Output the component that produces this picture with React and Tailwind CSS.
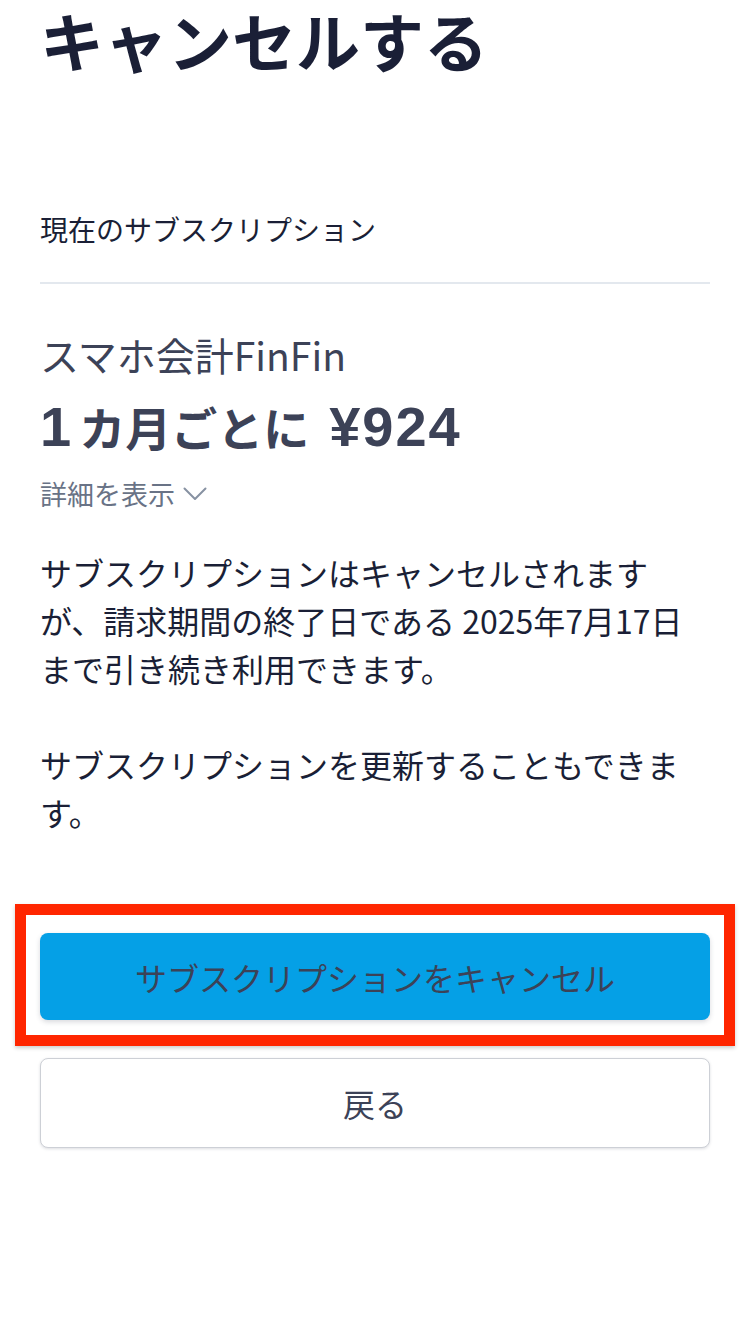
import React from "react";

export default function App() {
  return (
    <div
      className="w-[750px] min-h-[1334px] bg-white px-10"
      style={{ fontFamily: '"Noto Sans CJK JP", "Noto Sans", sans-serif' }}
    >
      <h1 className="pt-[1px] text-[64px] leading-[76px] font-bold text-[#1a1f36]">
        キャンセルする
      </h1>

      <div className="mt-[132px] border-b-2 border-[#e3e8ee] pb-[33px]">
        <div className="text-[28px] leading-[40px] text-[#1a1f36]">
          現在のサブスクリプション
        </div>
      </div>

      <div className="mt-[46px] text-[39px] leading-[48px] text-[#3c4257]">
        スマホ会計FinFin
      </div>
      <div className="mt-[20px] h-[56px] whitespace-nowrap text-[46px] leading-[56px] font-bold text-[#3c4257]">
        <span className="text-[56px] leading-[56px]" style={{ fontFamily: '"Liberation Sans", Arial, sans-serif' }}>1</span>
        <span className="ml-[8px]">カ月ごとに</span>
        <span className="ml-[20px] text-[56px] leading-[56px] tracking-[2px]" style={{ fontFamily: '"Liberation Sans", Arial, sans-serif' }}>¥924</span>
      </div>
      <div className="mt-[22px] flex items-center gap-[8px] text-[27px] leading-[36px] text-[#697386]">
        <span>詳細を表示</span>
        <svg width="24" height="14" viewBox="0 0 24 14" fill="none">
          <path d="M1.5 1.5 L12 12 L22.5 1.5" stroke="#8792a2" strokeWidth="2" strokeLinecap="round" strokeLinejoin="round" />
        </svg>
      </div>

      <div className="mt-[36px] text-[32px] leading-[48px] text-[#1a1f36]">
        <p>
          サブスクリプションはキャンセルされますが、請求期間の終了日である 2025年7月17日まで引き続き利用できます。
        </p>
        <p className="mt-[48px]">サブスクリプションを更新することもできます。</p>
      </div>

      <div className="relative mt-[97px]">
        <button className="flex h-[87px] w-full items-center justify-center rounded-lg bg-[#05a0e6] text-[32px] font-normal text-[#3c4257] shadow-[0_2px_5px_rgba(60,66,87,0.2)]">
          サブスクリプションをキャンセル
        </button>
        <div className="pointer-events-none absolute left-[-25px] top-[-29px] h-[142px] w-[720px] border-[11px] border-[#ff2600] shadow-[0_2px_4px_rgba(0,0,0,0.2)]" />
      </div>

      <button className="mt-[38px] flex h-[90px] w-full items-center justify-center rounded-lg border-[1.5px] border-[#cdd0d6] bg-white text-[32px] text-[#3c4257] shadow-[0_1px_3px_rgba(60,66,87,0.18)]">
        戻る
      </button>
    </div>
  );
}
